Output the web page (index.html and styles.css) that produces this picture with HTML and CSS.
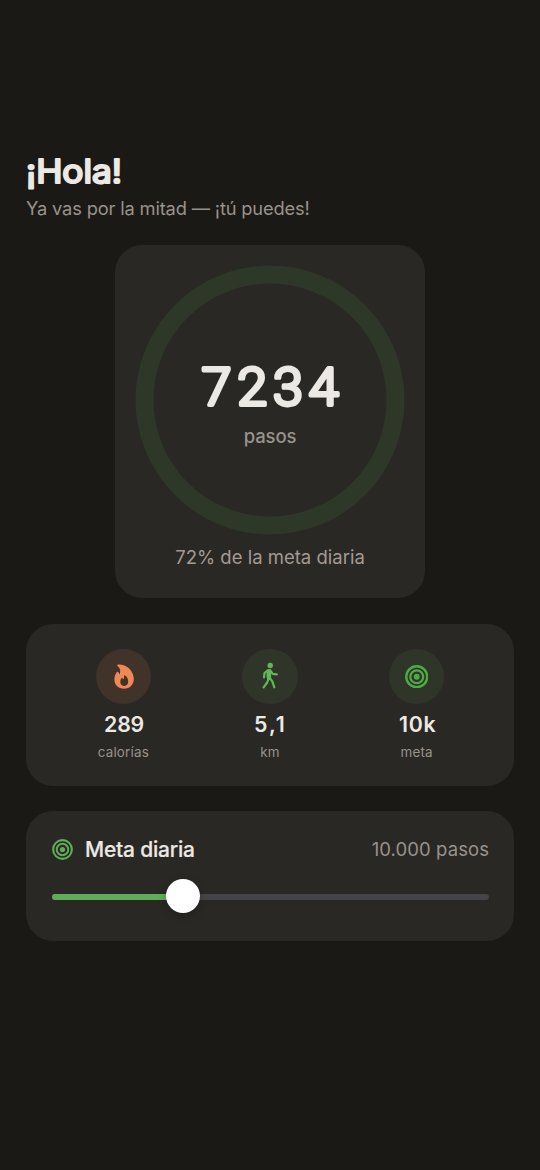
FILE: index.html
```html
<!DOCTYPE html>
<html lang="es">
<head>
<meta charset="utf-8">
<title>Pasos</title>
<link rel="stylesheet" href="styles.css">
</head>
<body>
<svg class="defs" aria-hidden="true">
  <symbol id="target" viewBox="0 0 24 24">
    <circle cx="12" cy="12" r="10.7" fill="none" stroke="currentColor" stroke-width="2.4"/>
    <circle cx="12" cy="12" r="6.6" fill="none" stroke="currentColor" stroke-width="2.3"/>
    <circle cx="12" cy="12" r="3" fill="currentColor"/>
  </symbol>
</svg>
<main class="screen">
  <header class="greeting">
    <h1 class="title"><svg class="title-art" width="110" height="44"><text x="0" y="29.500" textLength="96" lengthAdjust="spacingAndGlyphs">¡Hola!</text></svg></h1>
    <p class="subtitle">Ya vas por la mitad — ¡tú puedes!</p>
  </header>
  <section class="card hero">
    <div class="dial">
      <svg class="ring" viewBox="0 0 270 270"><circle cx="135" cy="135" r="125.5"/></svg>
      <svg class="count" width="180" height="80"><text x="21.5" y="58.500" textLength="143" lengthAdjust="spacingAndGlyphs">7234</text></svg>
      <p class="unit">pasos</p>
    </div>
    <p class="progress">72% de la meta diaria</p>
  </section>
  <section class="card stats">
    <div class="stat">
      <div class="badge orange"><svg class="flame" width="24" height="28" viewBox="0 0 24 28"><path fill="currentColor" fill-rule="evenodd" d="M6 2.5C13.500 1.800 21.800 8 21.800 17C21.800 22.500 17.700 26.800 12 26.800C6.300 26.800 2.400 22.800 2.400 17.500C2.400 14.400 3.500 12.400 4.500 10.500C5.100 9.400 6.500 9.700 6.700 10.800C6.900 11.600 7.200 12 7.600 12.300C8.800 9.500 8.500 6.500 5.800 4.200C5 3.500 5.200 2.600 6 2.500ZM12.500 13.200C12 13 11.800 13.500 12 14.200C12.300 15.500 12 16.400 11.400 17.300C10.900 17.100 10.600 16.700 10.500 16.200C10.300 15.700 9.700 15.700 9.400 16.200C8.600 17.400 8.300 18.500 8.300 19.700C8.300 22.200 9.900 23.900 12.200 23.900C14.600 23.900 16.200 22.200 16.200 19.600C16.200 16.700 14.900 14.300 12.500 13.200Z"/></svg></div>
      <strong class="value first">289</strong><span class="label">calorías</span>
    </div>
    <div class="stat">
      <div class="badge walk"><svg width="18" height="28" viewBox="0 0 18 28"><circle cx="9.200" cy="3.500" r="2.700" fill="currentColor"/><path d="M7.900 9.200L7.800 15.300" stroke-width="4.600"/><path d="M6.500 8.600L3.500 11L3 15.300M9.300 8.400L11.700 11.900L15.800 12.300M7.700 16L6.200 20.500L2.600 25.300M8.500 15.500L11.300 19.400L13.300 25.300" stroke-width="2.200"/></svg></div>
      <strong class="value spaced">5,1</strong><span class="label">km</span>
    </div>
    <div class="stat">
      <div class="badge green"><svg width="23.5" height="23.5"><use href="#target"/></svg></div>
      <strong class="value wide">10k</strong><span class="label">meta</span>
    </div>
  </section>
  <section class="card goal">
    <div class="goal-row">
      <svg class="goal-icon"><use href="#target"/></svg>
      <h2 class="goal-title">Meta diaria</h2>
      <span class="goal-value">10.000 pasos</span>
    </div>
    <div class="track"><div class="fill"></div><div class="thumb"></div></div>
  </section>
</main>
</body>
</html>
```
FILE: styles.css
```css
* { box-sizing: border-box; margin: 0; padding: 0; }
body { background: #1a1916; color: #ece9e4; font-family: Inter, sans-serif; }
svg { display: block; }
.defs { width: 0; height: 0; position: absolute; }
.screen { width: 540px; height: 1170px; padding: 153px 26px 0; display: flex; flex-direction: column; }
.greeting { height: 92px; }
.title { height: 44px; }
.title-art { overflow: visible; }
.title-art text, .count text { fill: #ece9e4; stroke: #ece9e4; stroke-linejoin: round; stroke-linecap: round; }
.title-art text { font-size: 32px; font-weight: 400; stroke-width: 2.1px; }
.subtitle { margin-top: -1px; font-size: 18.3px; line-height: 24px; letter-spacing: -0.16px; color: #99928c; white-space: nowrap; }
.card { background: #292824; border-radius: 27px; }
.hero { width: 310.5px; height: 353px; align-self: center; padding-top: 20px; display: flex; flex-direction: column; align-items: center; }
.dial { display: grid; width: 270px; height: 270px; grid-template-rows: 81px 80px 30px 1fr; justify-items: center; }
.ring { grid-area: 1 / 1 / 5 / 2; width: 270px; height: 270px; }
.ring circle { fill: none; stroke: #2e3829; stroke-width: 18; }
.count { grid-area: 2 / 1; overflow: visible; }
.count text { font-family: Roboto, sans-serif; font-size: 51px; font-weight: 300; stroke-width: 3.8px; letter-spacing: 5.5px; }
.unit { grid-area: 3 / 1; margin-top: -2px; font-size: 18.5px; line-height: 24px; font-weight: 500; letter-spacing: -0.1px; color: #99928c; }
.progress { margin-top: 10px; font-size: 18.5px; line-height: 24px; color: #a39b95; white-space: nowrap; }
.stats { margin-top: 26px; height: 162px; padding: 24.5px 24px 0; display: grid; grid-template-columns: repeat(3, 1fr); }
.stat { display: flex; flex-direction: column; align-items: center; }
.badge { width: 55.5px; height: 55.5px; border-radius: 50%; display: grid; place-items: center; }
.orange { background: #41322a; color: #ee8957; }
.flame { margin-left: 1px; }
.green { background: #2f3529; color: #4faa45; }
.walk { background: #2f3529; color: #60b856; }
.badge path[stroke-width] { fill: none; stroke: currentColor; stroke-linecap: round; stroke-linejoin: round; }
.value { margin-top: 6px; font-size: 21.3px; line-height: 28px; font-weight: 600; }
.first { letter-spacing: -0.2px; padding-left: 1.5px; }
.spaced { letter-spacing: 2px; padding-left: 1px; }
.wide { letter-spacing: 0.7px; padding-left: 2px; }
.label { margin-top: 4px; font-size: 13.4px; line-height: 20px; letter-spacing: 0.2px; color: #99928c; }
.goal { margin-top: 25px; height: 130px; padding: 24px 25px 0 26px; }
.goal-row { display: flex; align-items: center; height: 28px; }
.goal-icon { width: 21px; height: 21px; color: #60ad57; }
.goal-title { margin: 2px 0 0 12px; font-size: 21px; line-height: 28px; font-weight: 500; letter-spacing: -0.22px; white-space: nowrap; -webkit-text-stroke: 0.2px currentColor; }
.goal-value { margin-left: auto; font-size: 18.5px; line-height: 28px; letter-spacing: 0.08px; color: #99928c; white-space: nowrap; }
.track { position: relative; height: 5.5px; margin-top: 31px; background: #454446; border-radius: 3px; }
.fill { width: 30%; height: 5.5px; border-radius: 3px; background: #60ad57; }
.thumb { position: absolute; left: 114px; top: -15.5px; width: 34px; height: 34px; border-radius: 50%; background: #fff; box-shadow: 0 3px 8px rgba(0, 0, 0, 0.2); }
```
